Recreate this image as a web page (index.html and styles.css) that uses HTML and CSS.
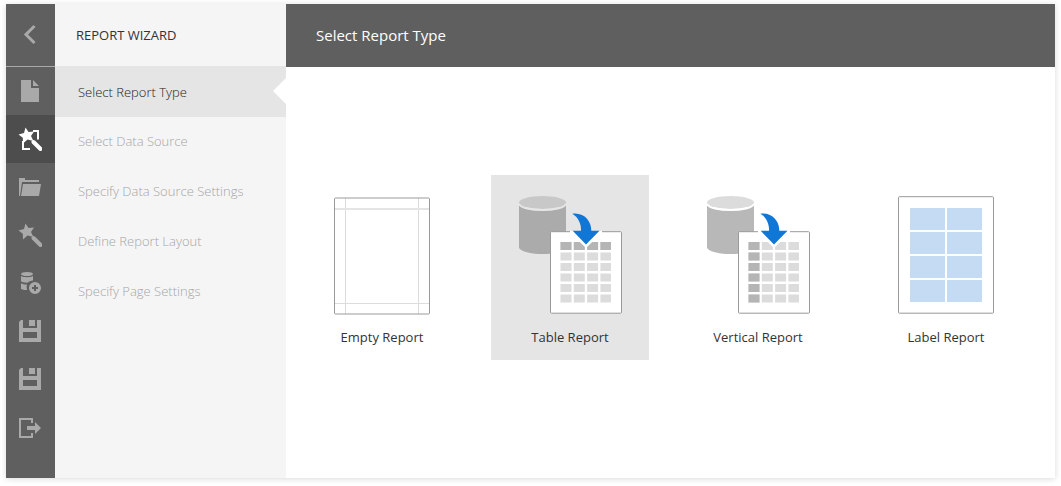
FILE: index.html
```
<!DOCTYPE html>
<html lang="en">
<head>
<meta charset="utf-8">
<meta name="viewport" content="width=device-width, initial-scale=1">
<title>Report Wizard</title>
<link rel="stylesheet" href="styles.css">
</head>
<body>
<svg class="defs" aria-hidden="true">
  <symbol id="save" viewBox="0 0 24 24"><path fill-rule="evenodd" d="M3 1H5V9H19V1H23V23H1V3ZM5 13V19H19V13ZM11 1H17V7H11Z"/></symbol>
  <symbol id="cells" viewBox="0 0 104 120">
    <path fill="none" stroke-width="8" stroke-dasharray="11 2.3" d="M42.5 51H93M42.5 61.5H93M42.5 72H93M42.5 82.500H93M42.5 93H93M42.5 103.500H93"/>
  </symbol>
  <symbol id="arrow" viewBox="0 0 104 120">
    <path d="M54.300 18.700C66 17 73.500 26 73.300 35.800H81.500L68 49.500L54.700 35.800H63C63.500 29 60 22 54.300 18.700Z"/>
  </symbol>
</svg>
<div class="window">
  <nav class="rail" aria-label="Menu">
    <button class="rail-back" aria-label="Back"><svg class="icon" viewBox="0 0 24 24"><path class="line" d="M16.500 3L8 11.500L16.500 20"/></svg></button>
    <button class="rail-item" aria-label="New"><svg class="icon" viewBox="0 0 24 24"><path d="M3 1H13V9H21V23H3ZM15 1L21 7H15Z"/></svg></button>
    <button class="rail-item active" aria-label="New via wizard"><svg class="icon" viewBox="0 0 24 24"><path class="thin" d="M15 4H20V12.500M5 14V22H12"/><path d="M7.500 .5L10.500 5L16 4.500L13 9L15.500 14L9.500 12.500L5 16.500L4.800 10.800L.5 7.500L6 6Z"/><path class="wand" d="M15.500 15L22.500 22"/></svg></button>
    <button class="rail-item" aria-label="Open"><svg class="icon" viewBox="0 0 24 24"><path d="M1 3H7V5H21V7H4L2 21H1ZM5 9H23L21 21H3Z"/></svg></button>
    <button class="rail-item" aria-label="Design in wizard"><svg class="icon" viewBox="0 0 24 24"><path d="M7.500 .5L10.500 5L16 4.500L13 9L15.500 14L9.500 12.500L5 16.500L4.800 10.800L.5 7.500L6 6Z"/><path class="wand" d="M15.500 15L22.500 22"/></svg></button>
    <button class="rail-item" aria-label="Add data source"><svg class="icon" viewBox="0 0 24 24"><ellipse cx="9" cy="3" rx="6" ry="2"/><path d="M3 5C5 6.600 13 6.600 15 5V9.500C12.500 9.800 11 10.500 10 11.600C7 11.800 4 11.200 3 10.300ZM3 12.200C4.500 13.200 7 13.500 9 13.400C8.500 15 8.500 17.500 9.200 19C6 19.200 3.500 18.500 3 17.800Z"/><path fill-rule="evenodd" d="M17 11A6 6 0 1 1 17 23A6 6 0 1 1 17 11ZM16 14V16H14V18H16V20H18V18H20V16H18V14Z"/></svg></button>
    <button class="rail-item" aria-label="Save"><svg class="icon"><use href="#save"/></svg></button>
    <button class="rail-item" aria-label="Save as"><svg class="icon"><use href="#save"/></svg></button>
    <button class="rail-item" aria-label="Exit"><svg class="icon" viewBox="0 0 24 24"><path d="M1 3H15V8H13V5H3V21H13V18H15V23H1ZM9 11H17V7L23 13L17 19V15H9Z"/></svg></button>
  </nav>
  <aside class="steps">
    <h2 class="steps-title">REPORT WIZARD</h2>
    <button class="step current" aria-current="step">Select Report Type</button>
    <button class="step" disabled>Select Data Source</button>
    <button class="step" disabled>Specify Data Source Settings</button>
    <button class="step" disabled>Define Report Layout</button>
    <button class="step" disabled>Specify Page Settings</button>
  </aside>
  <main class="page">
    <h1 class="page-title">Select Report Type</h1>
    <div class="cards">
      <button class="card">
        <svg class="picture" viewBox="0 0 104 120"><path fill="none" stroke="#dcdcdc" d="M15.500 3V119M88.500 3V119M5 108.500H99"/><path fill="none" stroke="#e4e4e4" stroke-width="2" d="M5 14H99"/><rect class="sheet-line" x="4.500" y="3" width="95" height="116" rx="1"/></svg>
        <span>Empty Report</span>
      </button>
      <button class="card selected" aria-pressed="true">
        <svg class="picture" viewBox="0 0 104 120">
          <path fill="#ababab" d="M1 9C8 17 41 17 48 9V53C42 61 7 61 1 53Z"/><ellipse cx="24.500" cy="7.500" rx="23.500" ry="6.500" fill="#c8c8c8"/><path fill="none" stroke="#e6e6e6" stroke-width="2" d="M1 9C4 17 45 17 48 9"/>
          <rect class="sheet" x="32.500" y="36.700" width="71" height="81.500" rx="1"/>
          <use href="#cells" stroke="#dcdcdc"/>
          <path fill="none" stroke="#b5b5b5" stroke-width="8" stroke-dasharray="11 2.300" d="M42.500 51H93"/>
          <path fill="#fff" d="M52 36H84V37.500L68 53L52 37.500Z"/><use href="#arrow" fill="#1177d7"/>
        </svg>
        <span>Table Report</span>
      </button>
      <button class="card">
        <svg class="picture" viewBox="0 0 104 120">
          <path fill="#b8b8b8" d="M1 9C8 17 41 17 48 9V53C42 61 7 61 1 53Z"/><ellipse cx="24.500" cy="7.500" rx="23.500" ry="6.500" fill="#dcdcdc"/><path fill="none" stroke="#fff" stroke-width="2" d="M1 9C4 17 45 17 48 9"/>
          <rect class="sheet" x="32.500" y="36.700" width="71" height="81.500" rx="1"/>
          <use href="#cells" stroke="#dcdcdc"/>
          <path fill="none" stroke="#b5b5b5" stroke-width="8" d="M42.500 51H53.500M42.500 61.500H53.500M42.500 72H53.500M42.500 82.500H53.500M42.500 93H53.500M42.500 103.500H53.500"/>
          <path fill="#fff" d="M52 36H84V37.500L68 53L52 37.500Z"/><use href="#arrow" fill="#1177d7"/>
        </svg>
        <span>Vertical Report</span>
      </button>
      <button class="card">
        <svg class="picture" viewBox="0 0 104 120"><rect class="sheet" x="4.500" y="1.700" width="95" height="116.500" rx="1"/><path fill="#c5dbf3" d="M16 13H51V35H16ZM53 13H88V35H53ZM16 37H51V59H16ZM53 37H88V59H53ZM16 61H51V83H16ZM53 61H88V83H53ZM16 85H51V107H16ZM53 85H88V107H53Z"/></svg>
        <span>Label Report</span>
      </button>
    </div>
  </main>
</div>
</body>
</html>
```
FILE: styles.css
```
* { box-sizing: border-box; }

body {
  margin: 0;
  padding: 4px 6px 8px;
  min-height: 100vh;
  display: flex;
  background: #fff;
  color: #333;
  font: 13px/20px "Open Sans", "Noto Sans", sans-serif;
}

button {
  margin: 0;
  padding: 0;
  border: 0;
  background: none;
  color: inherit;
  font: inherit;
}

.defs { position: absolute; width: 0; height: 0; }

.window {
  flex: 1;
  display: flex;
  background: #fff;
  box-shadow: 0 1px 6px rgba(0, 0, 0, 0.15);
}

.rail {
  flex: none;
  width: 49px;
  display: flex;
  flex-direction: column;
  background: #5f5f5f;
  color: #a9a9a9;
}

.rail-back,
.rail-item {
  display: flex;
  align-items: center;
  justify-content: center;
  height: 48px;
  padding-right: 1px;
}

.rail-back {
  height: 63px;
  border-bottom: 1px solid #a9a9a9;
}

.rail-item.active {
  background: #4d4d4d;
  color: #fff;
}

.icon {
  width: 24px;
  height: 24px;
  fill: currentColor;
}

.line, .thin, .wand { fill: none; stroke: currentColor; }
.line { stroke-width: 3; }
.thin { stroke-width: 2; }
.wand { stroke-width: 4; stroke-linecap: round; }

.steps {
  flex: none;
  width: 231px;
  display: flex;
  flex-direction: column;
  background: #f5f5f5;
}

.steps-title {
  margin: 0;
  padding: 21px;
  font-size: 13px;
  line-height: 20px;
  font-weight: 400;
}

.step {
  height: 50px;
  padding: 0 23px;
  text-align: left;
  font-weight: 300;
  color: #a6a6a6;
}

.step.current {
  position: relative;
  height: 51px;
  margin-bottom: -1px;
  background: #e5e5e5;
  color: #222;
}

.step.current::after {
  content: "";
  position: absolute;
  right: 0;
  top: 12px;
  border: 13px solid transparent;
  border-left: 0;
  border-right-color: #fff;
}

.page {
  flex: 1;
  min-width: 0;
  display: flex;
  flex-direction: column;
}

.page-title {
  margin: 0;
  padding: 19px 30px 20px;
  background: #5f5f5f;
  color: #fff;
  font-size: 15px;
  line-height: 24px;
  font-weight: 400;
}

.cards {
  flex: 1;
  display: flex;
  flex-wrap: wrap;
  align-content: center;
  justify-content: center;
  gap: 30px;
  padding: 0 13px 10px 0;
}

.card {
  width: 158px;
  padding: 20px 0 13px;
  display: flex;
  flex-direction: column;
  align-items: center;
  gap: 12px;
}

.card.selected { background: #e5e5e5; }

.picture { width: 104px; height: 120px; }

.sheet, .sheet-line { stroke: #999; }
.sheet { fill: #fff; }
.sheet-line { fill: none; }
```
